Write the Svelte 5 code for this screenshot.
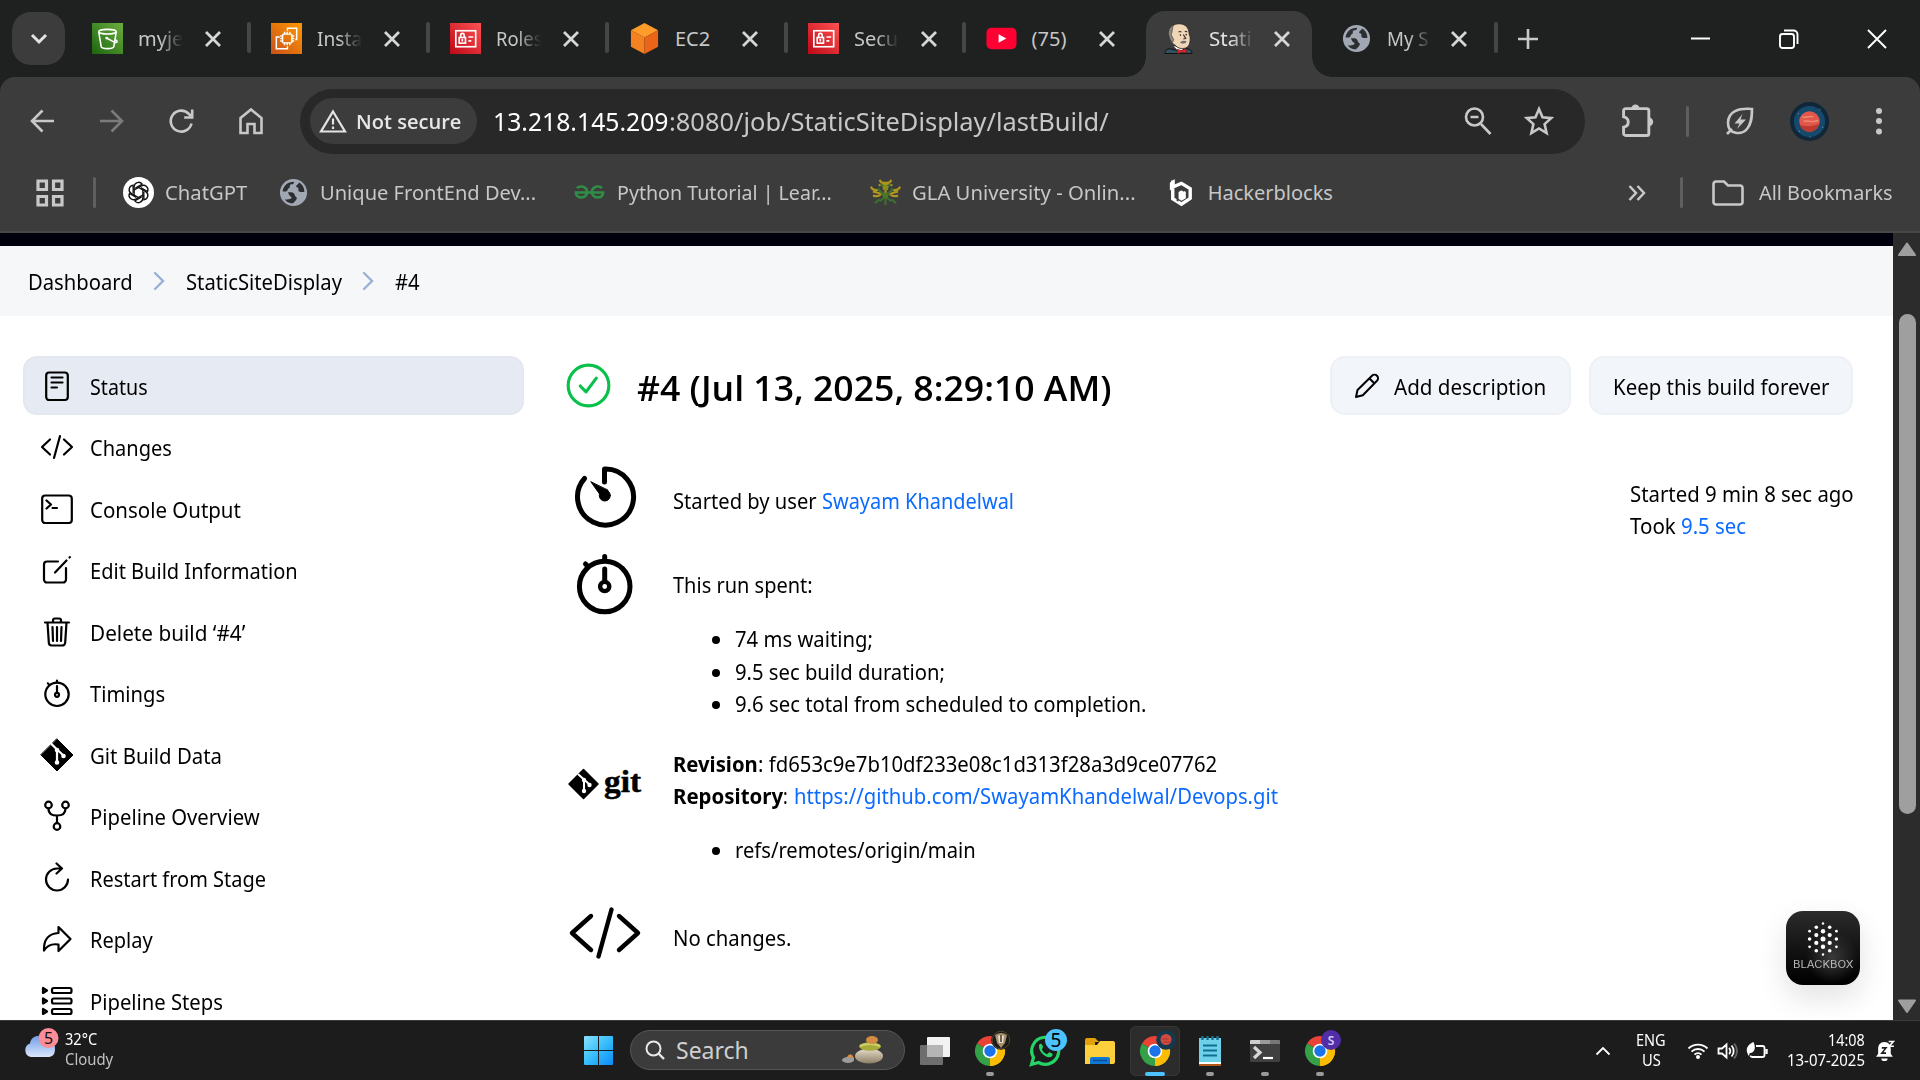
<script>
  // Scales a run of text horizontally to its design width.
  function fit(node, width) {
    const natural = node.offsetWidth;
    node.style.transform = `scaleX(${width / natural})`;
    node.style.marginRight = `${width - natural}px`;
  }

  const tabs = [
    { icon: 'bucket', title: 'myje', w: 45, fade: true },
    { icon: 'instances', title: 'Insta', w: 45, fade: true },
    { icon: 'iam', title: 'Roles', w: 47, fade: true },
    { icon: 'ec2', title: 'EC2', w: 35 },
    { icon: 'iam', title: 'Secu', w: 44, fade: true },
    { icon: 'youtube', title: '(75)', w: 35 },
    { icon: 'jenkins', title: 'Stati', w: 43, fade: true, active: true },
    { icon: 'globe', title: 'My S', w: 42, fade: true }
  ];

  const bookmarks = [
    { icon: 'chatgpt', title: 'ChatGPT', w: 82, gap: 31 },
    { icon: 'globe', title: 'Unique FrontEnd Dev...', w: 216, gap: 38 },
    { icon: 'gfg', title: 'Python Tutorial | Lear...', w: 215, gap: 38 },
    { icon: 'gla', title: 'GLA University - Onlin...', w: 224, gap: 29 },
    { icon: 'hack', title: 'Hackerblocks', w: 125, gap: 0 }
  ];

  const menu = [
    { icon: 'doc', label: 'Status', w: 58, active: true },
    { icon: 'code', label: 'Changes', w: 82 },
    { icon: 'console', label: 'Console Output', w: 151 },
    { icon: 'edit', label: 'Edit Build Information', w: 208 },
    { icon: 'trash', label: 'Delete build ‘#4’', w: 155 },
    { icon: 'timer', label: 'Timings', w: 75 },
    { icon: 'git', label: 'Git Build Data', w: 132 },
    { icon: 'fork', label: 'Pipeline Overview', w: 170 },
    { icon: 'restart', label: 'Restart from Stage', w: 176 },
    { icon: 'replay', label: 'Replay', w: 63 },
    { icon: 'steps', label: 'Pipeline Steps', w: 133 }
  ];

  const dots = [
    [0, -15.5, 1.2], [-6.7, -11.7, 1.8], [6.7, -11.7, 1.8],
    [-13.4, -7.8, 1.4], [0, -7.8, 2.2], [13.4, -7.8, 1.4],
    [-6.7, -3.9, 2.1], [6.7, -3.9, 2.1],
    [-13.4, 0, 1.8], [0, 0, 2.5], [13.4, 0, 1.8],
    [-6.7, 3.9, 2.1], [6.7, 3.9, 2.1],
    [-13.4, 7.8, 1.4], [0, 7.8, 2.2], [13.4, 7.8, 1.4],
    [-6.7, 11.7, 1.8], [6.7, 11.7, 1.8], [0, 15.5, 1.2]
  ];
</script>

{#snippet favicon(name)}
  <svg class="fav" viewBox="0 0 32 32">
    {#if name === 'bucket'}
      <defs><linearGradient id="gb" x1="0" y1="1" x2="1" y2="0"><stop offset="0" stop-color="#1b660f" /><stop offset="1" stop-color="#6cae3e" /></linearGradient></defs>
      <rect width="32" height="32" fill="url(#gb)" />
      <g fill="none" stroke="#fff" stroke-width="1.6"><ellipse cx="16" cy="9" rx="9" ry="2.4" /><path d="M7 9.5 9.5 24.5c1 2.6 12 2.6 13 0L25 9.5M15 15.5l8 4.2c3 1 4-.5 1.5-2.2" /></g>
      <circle cx="15.2" cy="15.6" r="1.5" fill="#fff" />
    {:else if name === 'instances'}
      <defs><linearGradient id="gi" x1="0" y1="1" x2="1" y2="0"><stop offset="0" stop-color="#c8511b" /><stop offset="1" stop-color="#f90" /></linearGradient></defs>
      <rect width="32" height="32" fill="url(#gi)" />
      <g fill="none" stroke="#fff" stroke-width="1.5"><rect x="12" y="11.500" width="9.500" height="9" rx="1" /><path d="M14 9v2.500m2.700-2.500v2.500M19.400 9v2.500M14 20.500V23m2.700-2.500V23m2.700-2.500V23M9.500 13.500H12M9.500 16H12m-2.500 2.500H12m9.500-5H24M21.500 16H24m-2.500 2.500H24M17 8V5.500h9.500V17H25M9 14.500H5.500V26.500H17V24" /></g>
    {:else if name === 'iam'}
      <defs><linearGradient id="gr" x1="0" y1="1" x2="1" y2="0"><stop offset="0" stop-color="#bd0816" /><stop offset="1" stop-color="#ff5252" /></linearGradient></defs>
      <rect width="32" height="32" fill="url(#gr)" />
      <g fill="none" stroke="#fff" stroke-width="1.7"><rect x="6" y="8" width="20.500" height="16.500" /><rect x="9.500" y="15" width="6.500" height="5.800" /><path d="M11 15v-2.500a1.800 1.800 0 0 1 3.600 0V15M19 14.500h5M19 18.500h3M12.700 16.500v2.500" /></g>
    {:else if name === 'ec2'}
      <path d="M16 0 30 7.500 16 15 2 7.500z" fill="#ff9c2a" /><path d="M2 7.500 16 15v17L2 24.500z" fill="#f58220" /><path d="M30 7.500 16 15v17l14-7.500z" fill="#ec6418" />
    {:else if name === 'youtube'}
      <rect x="0.500" y="5" width="31" height="22" rx="5" fill="#ff0033" /><path d="m13 11.500 8 4.500-8 4.500z" fill="#fff" />
    {:else if name === 'jenkins'}
      <path d="M2 31.500c0-3 1.500-4.500 5-5l9 2 8-2c4 0 6 2 6 5z" fill="#335061" stroke="#111" />
      <path d="m11 24 6 6 6-5z" fill="#fff" />
      <path d="M6 12C5 4 11 .7 17 .8s10 4 10 10.700c1.500 3 1 5 1 7-.5 4-2 6.500-5 7.500-4 1-8 0-10.500-3C9 21 6 17 6 12z" fill="#f0d6b7" stroke="#2a2420" stroke-width=".9" />
      <path d="M6.500 14C4.500 9 6.500 4 11 2 9 6 10 9 8.500 12l2.500 5-1 3c-2-1-3-3.500-3.500-6z" fill="#8b8782" stroke="#3b3633" stroke-width=".6" />
      <path d="M16 9.500c1-1 2-1 3 0m3.500-.5c1-.8 1.700-.5 2.500.3M21 12l2.500 4-2.500.5" fill="none" stroke="#3b2a22" stroke-width="1.100" />
      <circle cx="18" cy="12.500" r=".8" fill="#2a2420" /><circle cx="24" cy="12" r=".8" fill="#2a2420" /><path d="M17.500 20q3-3 7-1-2.500 4-7 1z" fill="#6d6b6d" />
      <path d="m15 27 4 1.500 4.500-2 .8 4.500-4.500-1-4.500 1.500z" fill="#e0262b" stroke="#7a1414" stroke-width=".6" />
    {:else if name === 'globe'}
      <circle cx="16" cy="16" r="14" fill="#a2a8b3" />
      <path d="M4.800 15C5.300 9 10 4.800 16.500 4.800c.3 1.500-.7 2.700-2.500 2.700-1.700 0-2 1.300-1.800 2.500.2 1.700-2.200 1.500-2.200 3 0 1-.8 2-2 2zM10.500 15.500c3 .8 4.500-.3 6 1.500 1.200 1.400.5 2.500 2 3.500 1.800 1.200.5 3.500-1 4.500-.8.600-1 1.500-2 2.200-5-.2-7-2-8.500-4.200 3 .5 6.500 0 7-1.500.5-1.300-3.500-2-3.500-6zM19 10.500c2-.3 2.500 1.700 2 3-.4 1 1 2 2.500 2h3.700c.3-4-2-8-5.500-9.800-.4 2-3.700 2.500-2.700 4.800z" fill="#2c2e31" />
    {:else if name === 'chatgpt'}
      <circle cx="16" cy="16" r="16" fill="#fff" />
      <g fill="none" stroke="#111" stroke-width="1.400">
        {#each [0, 60, 120, 180, 240, 300] as a}
          <path d="M11.500 18.500V10a4.600 4.600 0 0 1 8.300-2.600L12.800 11.500" transform="rotate({a} 16 16)" />
        {/each}
      </g>
    {:else if name === 'gfg'}
      <g fill="none" stroke="#2f8d46" stroke-width="2.700"><path d="M3 11.500c2.500-2.500 8-2.500 10 1.500 2 5-2 8-5.500 8s-5.500-2-5.500-5h28c0 3-2 5-5.500 5s-7.500-3-5.500-8c2-4 7.500-4 10-1.500" /></g>
    {:else if name === 'gla'}
      <g fill="none" stroke="#b0961e" stroke-width="2.200"><path d="M10 3q1 3 4 3h4q3 0 4-3M9 9q7-5 14 0M1 10q2 5 9 3M31 10q-2 5-9 3M3 15q13 5 26 0M3 19q5 2 8-1M29 19q-5 2-8-1M16 5v14" /></g>
      <g fill="none" stroke="#3d6e30" stroke-width="2.200"><path d="M11 7l5 6 5-6M8 12l8 8 8-8M10 25l6-5 6 5M5 27l5-4M27 27l-5-4M16 19v10" /></g>
      <circle cx="16" cy="11" r="3" fill="#8d8a20" /><circle cx="16" cy="19" r="3" fill="#4e7426" />
    {:else}
      <path d="M8 3.500v7l9-4 9 5.500v10l-9 6-9-5.500V12" fill="none" stroke="#fff" stroke-width="3.500" /><path d="M5 6 10 2v9l-5 3zM13 15l4-2.500 4.500 3V22L17 24.500 13 22z" fill="#fff" /><path d="M13 25V15l4-2.500 3 2" fill="none" stroke="#3c3c3c" stroke-width="2" />
    {/if}
  </svg>
{/snippet}

{#snippet menuIcon(name)}
  <svg class="micon" viewBox="-18 -18 36 36" fill="none" stroke="#000" stroke-width="2.200" stroke-linecap="round" stroke-linejoin="round">
    {#if name === 'doc'}
      <rect x="-10.800" y="-13.500" width="21.600" height="27.500" rx="3" /><path d="M-5.500-8.500h11M-5.500-3.500h11M-5.500 1.500H0" />
    {:else if name === 'code'}
      <path d="M-7-7.500-15 0l8 7.500M7-7.500 15 0 7 7.500M3-11-3 11" />
    {:else if name === 'console'}
      <rect x="-14.800" y="-13.500" width="29.600" height="27.500" rx="3" /><path d="m-10.500-8.500 4.500 4-4.500 4M-4.500-1H0" />
    {:else if name === 'edit'}
      <path d="M1-8.500h-11a3 3 0 0 0-3 3v15a3 3 0 0 0 3 3H6a3 3 0 0 0 3-3V-2M-2 2.500 9.500-9.500M12.500-12.500l.4-.4" />
    {:else if name === 'trash'}
      <path d="M-12-9.500h24M-9.500-9.500l1.300 20a3 3 0 0 0 3 3H5.200a3 3 0 0 0 3-3l1.300-20M-4-9.500v-2a2 2 0 0 1 2-2h4a2 2 0 0 1 2 2v2M0-5V9M-4.500-5l.5 14M4.500-5 4 9" />
    {:else if name === 'timer'}
      <circle cy="1.300" r="11.700" /><circle cy="1.800" r="2" /><path d="M0-1v-6M0-10.500v-2M-8.500-9l-.7-.7" />
    {:else if name === 'git'}
      <path d="M0-16 16 0 0 16-16 0z" fill="#000" stroke-width="1" /><path d="M-5.500-11 0-5.500V7M0-5.500 6.500.5" stroke="#fff" /><circle cy="7.500" r="2.300" fill="#fff" stroke="none" /><circle cx="6.500" cy="1" r="2.300" fill="#fff" stroke="none" /><circle cy="-5" r="2.300" fill="#fff" stroke="none" />
    {:else if name === 'fork'}
      <circle cx="-8.500" cy="-11" r="3.300" /><circle cx="8.500" cy="-11" r="3.300" /><circle cy="10.500" r="3.300" /><path d="M-8.500-7.500C-8.500-2-5-.5 0-.5s8.500-1.500 8.500-7M0-.5V7" />
    {:else if name === 'restart'}
      <path d="M11 1.500A11 11 0 1 1 0-9.500h5M-.5-14.500l5.500 5-5.500 5" />
    {:else if name === 'replay'}
      <path d="M1.500-12 13.500 0 1.500 12V5.500C-5 4.500-10 6.500-13 11.500c-.5-11 5-17 14.500-17.500z" />
    {:else}
      <path d="M-14-13v5l4-2.500zM-14-2.500v5l4-2.500zM-14 8v5l4-2.500z" /><rect x="-5" y="-13" width="19.500" height="5" rx="1.800" /><rect x="-5" y="-2.500" width="19.500" height="5" rx="1.800" /><rect x="-5" y="8" width="19.500" height="5" rx="1.800" />
    {/if}
  </svg>
{/snippet}

{#snippet chrome(kind)}
  <svg viewBox="0 0 50 60">
    <path d="M25 30 12 22.500A15 15 0 0 1 38 22.500z" fill="#ea4335" />
    <path d="M25 30h0L38 22.500A15 15 0 0 1 25 45l-3-5z" fill="#fbbc04" />
    <path d="M25 30 25 45A15 15 0 0 1 12 22.500z" fill="#34a047" />
    <path d="M25 23h13.200A15 15 0 0 1 25 45l6.300-11.500z" fill="#fbbc04" />
    <circle cx="25" cy="30" r="7.300" fill="#fff" /><circle cx="25" cy="30" r="5.700" fill="#1a73e8" />
    {#if kind === 'lion'}
      <circle cx="36" cy="19" r="9.800" fill="#1d1a17" /><path d="M30 14q6-4 12 0l-2 8-4 5-4-5z" fill="#a4906d" /><path d="M33 15q3-2 6 0l-1 7h-4z" fill="#e6dfcf" /><path d="M36 14v7" stroke="#463a2a" stroke-width="1.500" /><circle cx="36" cy="19" r="8.800" fill="none" stroke="#4d4432" />
    {:else if kind === 'planet'}
      <circle cx="36" cy="19" r="9.800" fill="#14384f" /><circle cx="36" cy="18.500" r="5.500" fill="#d14b40" /><path d="M31.500 18h7M33 21h7" stroke="#a8362f" />
    {:else}
      <circle cx="36" cy="19" r="10" fill="#512da8" /><text x="36" y="23.500" text-anchor="middle" class="badge-s">S</text>
    {/if}
  </svg>
{/snippet}

<div class="screen">
  <div class="tabstrip">
    <div class="tab-menu"><svg width="20" height="14" viewBox="0 0 20 14"><path d="m3 3 7 7 7-7" fill="none" stroke="#e3e3e3" stroke-width="3" /></svg></div>
    <div class="tabs">
      {#each tabs as t, i}
        <div class="tab" class:active={t.active} class:sep={i !== 5 && !t.active}>
          {@render favicon(t.icon)}
          <div class="tab-title" class:fade={t.fade}><span class="t" use:fit={t.w}>{t.title}</span></div>
          <svg class="x" viewBox="0 0 18 18"><path d="m2 2 14 14M16 2 2 16" /></svg>
        </div>
      {/each}
    </div>
    <svg class="plus" viewBox="0 0 20 20"><path d="M10 0v20M0 10h20" stroke="#c8c8c8" stroke-width="2.600" /></svg>
    <div class="winctl">
      <svg viewBox="0 0 20 20"><path d="M0 9.500h19" stroke-width="2" /></svg>
      <svg viewBox="0 0 20 20"><rect x="1" y="5" width="14" height="14" rx="2.500" /><path d="M5 1.500h9.500a4 4 0 0 1 4 4V15" /></svg>
      <svg viewBox="0 0 20 20"><path d="m1 1 18 18M19 1 1 19" /></svg>
    </div>
  </div>

  <div class="chrome-body">
    <div class="toolbar">
      <div class="nav">
        <svg viewBox="0 0 28 28"><path d="M26 14H4M14.500 3.500 4 14l10.500 10.500" /></svg>
        <svg class="dim" viewBox="0 0 28 28"><path d="M2 14h22M13.500 3.500 24 14 13.500 24.500" /></svg>
        <svg viewBox="0 0 28 28"><path d="M24.500 16.500a10.500 10.500 0 1 1-2.500-9.500l3 3M25.200 2.500v8h-8" /></svg>
        <svg viewBox="0 0 28 28"><path d="M3.500 11 14 2.500 24.500 11v15h-7v-9h-7v9h-7z" /></svg>
      </div>
      <div class="omnibox">
        <div class="chip">
          <svg width="28" height="24" viewBox="0 0 28 24"><path d="M14 2.500 26 22.500H2z" fill="none" stroke="#e3e3e3" stroke-width="2.200" /><path d="M14 9.500v6M14 17.500v2.500" stroke="#e3e3e3" stroke-width="2.200" /></svg>
          <span class="t" use:fit={105}>Not secure</span>
        </div>
        <div class="url"><span class="t host" use:fit={176}>13.218.145.209</span><span class="t" use:fit={440}>:8080/job/StaticSiteDisplay/lastBuild/</span></div>
        <svg class="oi" viewBox="0 0 30 30"><circle cx="11.500" cy="11" r="8.500" /><path d="m18 18 9.500 10M7.500 11h8" /></svg>
        <svg class="oi star" viewBox="0 0 30 30"><path d="m15 3 3.500 8.300 8.700.8-6.600 6 2 8.900-7.600-4.600L7.400 27l2-8.900-6.600-6 8.700-.8z" /></svg>
      </div>
      <svg class="puzzle" viewBox="0 0 32 32"><path d="M2.500 6.500a2 2 0 0 1 2-2h20.500a2 2 0 0 1 2 2v22a2 2 0 0 1-2 2H4.500a2 2 0 0 1-2-2v-6c6-1 6-9 0-10z" /><path d="M10 4.500a4 4 0 0 1 8 0zM27 13a4 4 0 0 1 0 8.500z" fill="#c8c8c8" stroke="none" /></svg>
      <i class="vsep"></i>
      <svg class="leaf" viewBox="0 0 30 30"><path d="M27 3C14 2 3 5 3 17c0 12 14 12 19 6 4-5 5-10 5-20zM2 28l5-5" /><path d="m17.500 8-8 9.500h5L12 23l9-9.500h-5.500z" fill="#c8c8c8" stroke="none" /></svg>
      <svg class="avatar" viewBox="0 0 40 40"><circle cx="20" cy="20" r="20" fill="#0f2738" /><circle cx="20" cy="20" r="16" fill="#164a6c" /><circle cx="20" cy="20" r="10.500" fill="#e2574c" /><path d="M10 23c5 2 12 3 20-1-2 6-6 8.500-10 8.500S11 28 10 23z" fill="#bd3a30" /><path d="M12 15c5 2 6-1 12 0M14 20c5-2 8 2 15-1" stroke="#f08a72" stroke-width="1.500" fill="none" /><path d="M8 12h1M30 8h1M33 26h1M9 30h1M20 36h1" stroke="#6fa6c4" /></svg>
      <svg class="kebab" viewBox="0 0 8 28"><circle cx="4" cy="4" r="3" /><circle cx="4" cy="14" r="3" /><circle cx="4" cy="24.500" r="3" /></svg>
    </div>
    <div class="bookmarks">
      <svg class="grid" viewBox="0 0 28 28"><path d="M2 2h8.500v8.500H2zM17.500 2H26v8.500h-8.500zM2 17.500h8.500V26H2zM17.500 17.500H26V26h-8.500z" /></svg>
      <i class="vsep"></i>
      <div class="bm-list">
        {#each bookmarks as b}
          <div class="bm {b.icon}" style:margin-right="{b.gap}px">{@render favicon(b.icon)}<span class="t" use:fit={b.w}>{b.title}</span></div>
        {/each}
      </div>
      <svg class="more" viewBox="0 0 18 18"><path d="m1.500 2 6.500 7-6.500 7M9.500 2l6.500 7-6.500 7" /></svg>
      <i class="vsep"></i>
      <svg class="folder" viewBox="0 0 32 26"><path d="M1.500 4a2.500 2.500 0 0 1 2.500-2.500h8l4 4h12A2.500 2.500 0 0 1 30.500 8v14a2.500 2.500 0 0 1-2.500 2.500H4A2.500 2.500 0 0 1 1.500 22z" /></svg>
      <span class="t" use:fit={134}>All Bookmarks</span>
    </div>
  </div>

  <div class="viewport">
    <div class="page">
      <div class="strip"></div>
      <nav class="crumbs">
        <span class="t" use:fit={105}>Dashboard</span>
        <svg viewBox="0 0 12 20"><path d="m2 2 8 8-8 8" /></svg>
        <span class="t" use:fit={156}>StaticSiteDisplay</span>
        <svg viewBox="0 0 12 20"><path d="m2 2 8 8-8 8" /></svg>
        <span class="t" use:fit={25}>#4</span>
      </nav>
      <div class="body">
        <aside>
          {#each menu as m}
            <div class="item" class:on={m.active}>{@render menuIcon(m.icon)}<span class="t" use:fit={m.w}>{m.label}</span></div>
          {/each}
        </aside>
        <main>
          <div class="head">
            <svg class="ok" viewBox="0 0 46 46"><circle cx="23" cy="23" r="20.800" /><path d="m14.500 23.500 6 6 10.500-14" /></svg>
            <h1><span class="t" use:fit={474}>#4 (Jul 13, 2025, 8:29:10 AM)</span></h1>
            <div class="btn add"><svg viewBox="0 0 26 26"><path d="M2 24l1.500-7L18 2.800a3.400 3.400 0 0 1 5 5L8.800 22.300zM15.500 5.500l5 5" /></svg><span class="t" use:fit={152}>Add description</span></div>
            <div class="btn"><span class="t" use:fit={216}>Keep this build forever</span></div>
          </div>
          <div class="cols">
            <div class="rows">
              <div class="row r1">
                <svg viewBox="566 456 80 90"><path d="M604.500 482v-13a28 28 0 1 1-20 9.500" /><path d="m591 482 10 14a5.500 5.500 0 0 0 7-5.500z" class="solid" /><circle cx="604.800" cy="495.500" r="5.500" class="solid" /></svg>
                <div><span class="t" use:fit={144}>Started by user</span>&nbsp;<a class="t" use:fit={192}>Swayam Khandelwal</a></div>
              </div>
              <div class="row r2">
                <svg viewBox="566 546 80 90"><circle cx="604.700" cy="586.500" r="25.300" /><circle cx="604.700" cy="586.500" r="4.600" stroke-width="4.400" /><path d="M604.700 581.500v-12.500M604.700 559.500v-3M588 566.500l-2.500-2.500" /></svg>
                <div>
                  <span class="t" use:fit={140}>This run spent:</span>
                  <ul>
                    <li><span class="t" use:fit={138}>74 ms waiting;</span></li>
                    <li><span class="t" use:fit={210}>9.5 sec build duration;</span></li>
                    <li><span class="t" use:fit={412}>9.6 sec total from scheduled to completion.</span></li>
                  </ul>
                </div>
              </div>
              <div class="row r3">
                <svg viewBox="566 740 80 90"><path d="m583.500 769.500 14.500 14.500-14.500 14.500L569 784z" fill="#000" stroke-width="1.500" /><path d="m578.500 774.500 5.500 5v11M584 779.500l5.500 5" stroke="#fff" stroke-width="2" /><circle cx="584" cy="791" r="2.200" fill="#fff" stroke="none" /><circle cx="589.500" cy="785" r="2.200" fill="#fff" stroke="none" /><circle cx="584" cy="780" r="2.200" fill="#fff" stroke="none" /><text x="604" y="792" textLength="37" lengthAdjust="spacingAndGlyphs" class="git-word">git</text></svg>
                <div>
                  <p><b class="t" use:fit={85}>Revision</b><span class="t" use:fit={459}>: fd653c9e7b10df233e08c1d313f28a3d9ce07762</span></p>
                  <p><b class="t" use:fit={110}>Repository</b><span class="t" use:fit={5}>:</span><a class="t repo" use:fit={484}>https://github.com/SwayamKhandelwal/Devops.git</a></p>
                  <ul><li><span class="t" use:fit={241}>refs/remotes/origin/main</span></li></ul>
                </div>
              </div>
              <div class="row r4">
                <svg viewBox="566 880 80 90"><path d="m591 916-19 17 19 17M619 916l19 17-19 17M611.500 909.500l-13 47" stroke-width="4.400" /></svg>
                <div><span class="t" use:fit={118}>No changes.</span></div>
              </div>
            </div>
            <div class="when">
              <p><span class="t" use:fit={224}>Started 9 min 8 sec ago</span></p>
              <p><span class="t" use:fit={46}>Took</span><a class="t" use:fit={65}>9.5 sec</a></p>
            </div>
          </div>
        </main>
      </div>
      <div class="blackbox">
        <svg viewBox="-23 -18 46 36">{#each dots as [x, y, r]}<circle cx={x} cy={y} {r} fill="#fff" />{/each}</svg>
        <span class="t" use:fit={60}>BLACKBOX</span>
      </div>
    </div>
    <div class="scroll">
      <svg viewBox="0 0 20 15"><path d="M10 1.500 18 13H2z" /></svg>
      <div class="thumb"></div>
      <svg viewBox="0 0 20 15"><path d="M10 13 18 1.500H2z" /></svg>
    </div>
  </div>

  <div class="taskbar">
    <div class="weather">
      <svg viewBox="0 0 36 36"><defs><linearGradient id="cl" x1="0" y1="0" x2="0" y2="1"><stop offset="0" stop-color="#6f9de8" /><stop offset="1" stop-color="#dbe7fb" /></linearGradient></defs><path d="M8 31a7 7 0 0 1-1-13.500C8 9 19 7 23 14c6-1 9 3 9 9s-3 8-7 8z" fill="url(#cl)" /><circle cx="25.500" cy="12" r="10" fill="#fc8d97" /><text x="25.500" y="17.500" text-anchor="middle" class="badge-w">5</text></svg>
      <div class="two"><span class="t" use:fit={32}>32°C</span><span class="t grey" use:fit={48}>Cloudy</span></div>
    </div>
    <div class="apps">
      <svg class="win" viewBox="0 0 29 29"><defs><linearGradient id="wg" x1="0" y1="0" x2="1" y2="1"><stop offset="0" stop-color="#8be2ff" /><stop offset=".5" stop-color="#37bdfb" /><stop offset="1" stop-color="#0a8bf5" /></linearGradient></defs><path d="M0 1q0-1 1-1h13v14H0zM15 0h13q1 0 1 1v13H15zM0 15h14v14H1q-1 0-1-1zM15 15h14v13q0 1-1 1H15z" fill="url(#wg)" /></svg>
      <div class="search">
        <svg width="20" height="20" viewBox="0 0 20 20"><circle cx="8.500" cy="8.500" r="7" fill="none" stroke="#e8e8e8" stroke-width="2" /><path d="m13.500 13.500 5.500 5.500" stroke="#e8e8e8" stroke-width="2.400" /></svg>
        <span class="t" use:fit={73}>Search</span>
        <svg class="stones" viewBox="0 0 42 28"><defs><linearGradient id="st" x1="0" y1="0" x2="0" y2="1"><stop offset="0" stop-color="#e6dcc8" /><stop offset="1" stop-color="#8d8068" /></linearGradient></defs><path d="M4 24c1-5 4-7 6-5s3 5 1 6z" fill="#d98c3c" /><ellipse cx="6" cy="24" rx="6" ry="3" fill="#9b9b9b" /><ellipse cx="27" cy="20" rx="14" ry="7.500" fill="url(#st)" /><ellipse cx="28" cy="10.500" rx="11" ry="4.200" fill="#a6ab3c" /><path d="M18 10q10-4 20 0" stroke="#cfd26a" stroke-width="2" fill="none" /><ellipse cx="30" cy="4" rx="6" ry="4" fill="#d48b42" /></svg>
      </div>
      <svg class="views" viewBox="0 0 30 28"><rect x="7" width="23" height="20" rx="1" fill="#f2f2f2" /><rect y="8" width="23" height="20" rx="1" fill="#6e6e6e" /><rect x="7" y="8" width="16" height="12" fill="#b5b5b5" /></svg>
      <div class="app run">{@render chrome('lion')}</div>
      <div class="app">
        <svg viewBox="0 0 50 60"><path d="M11.500 43.500 13.500 36.500a13.500 13.500 0 1 1 5 5z" fill="none" stroke="#25d366" stroke-width="3.200" /><path d="M19 24c1.500-2 3-1.500 4 2l-1 2.500c1 2.500 3 4 5 4.800l2.200-2c3.500 1 4 2.200 2.800 4-4 3.500-14-3.300-13-11.300z" fill="#25d366" /><circle cx="36" cy="19" r="11" fill="#4cc2ff" /><text x="36" y="26" text-anchor="middle" class="badge-n">5</text></svg>
      </div>
      <div class="app"><svg viewBox="0 0 50 60"><path d="M10 19q0-2 2-2h8l4 4h-4v5H10z" fill="#e3a008" /><path d="M10 24h12l3-4h13q2 0 2 2v19q0 2-2 2H10z" fill="#fdcf3c" /><path d="M15 43v-5q0-2 2-2h16q2 0 2 2v5z" fill="#0f78d4" /><path d="M18 39.500h14" stroke="#0a4f94" stroke-width="1.500" /></svg></div>
      <div class="app run current">{@render chrome('planet')}</div>
      <div class="app run"><svg viewBox="0 0 50 60"><path d="M14 17h22v27H14z" fill="#6fd0ea" /><path d="M14 41h22v2.500H14z" fill="#fff" /><path d="M14 43h22v2H14z" fill="#b0581c" /><path d="M18 24.500h14M18 29.500h14M18 34.500h14" stroke="#0f6f91" stroke-width="1.800" /><path d="M17.500 15v4M22.500 15v4M27.500 15v4M32.500 15v4" stroke="#1b6f8c" stroke-width="2.400" /></svg></div>
      <div class="app run"><svg viewBox="0 0 50 60"><rect x="10" y="19" width="30" height="22" rx="1.500" fill="#404040" /><path d="M10 23v-3q0-1 1-1h9v4z" fill="#cfcfcf" /><path d="M20 19h10v4H20z" fill="#9a9a9a" /><path d="M30 19h9q1 0 1 1v3H30z" fill="#777" /><path d="m14 26 6 5.500-6 5.500" fill="none" stroke="#d8d8d8" stroke-width="3.200" /><path d="M23 37h10" stroke="#fff" stroke-width="2.200" /></svg></div>
      <div class="app run">{@render chrome('s')}</div>
    </div>
    <div class="tray">
      <svg class="caret" viewBox="0 0 16 10"><path d="m1.500 8.500 6.500-6.500 6.500 6.500" /></svg>
      <div class="two mid"><span class="t" use:fit={30}>ENG</span><span class="t" use:fit={19}>US</span></div>
      <svg class="wifi" viewBox="0 0 22 18"><path d="M1.500 6.500a13.500 13.500 0 0 1 19 0M4.500 9.700a9.200 9.200 0 0 1 13 0M7.500 12.700a5 5 0 0 1 7 0" /><circle cx="11" cy="15" r="2" fill="#fff" stroke="none" /></svg>
      <svg class="spk" viewBox="0 0 22 18"><path d="M1.500 6.500v5H5l4.500 4V2.500L5 6.500zM12 6a4 4 0 0 1 0 6M14.500 3.500a8 8 0 0 1 0 11" /><path d="M17 1.500a11 11 0 0 1 0 15" stroke="#666" /></svg>
      <svg class="bat" viewBox="0 0 22 18"><path d="M10 4h6.500q2 0 2 2v7q0 2-2 2h-10q-2 0-2-1.500" /><path d="M20.500 7v5" stroke-width="2.400" /><path d="M1 10C0 5 3 2 7.500 0c2.500 5 1.500 11-3.500 11L2.500 14z" fill="#fff" stroke="none" /></svg>
      <div class="two end"><span class="t" use:fit={37}>14:08</span><span class="t" use:fit={78}>13-07-2025</span></div>
      <svg class="bell" viewBox="0 0 20 20"><path d="M9 2c4 0 6 3 6 6.500V13l2 3H1l2-3V8.500C3 5 5 2 9 2zM6 17.500h6a3 2.500 0 0 1-6 0z" fill="#fff" /><path d="M6.500 7.500h4l-4 5h4" stroke="#1c1c1c" stroke-width="1.500" fill="none" /><path d="M13 1.500h4.500L13.500 6H18" stroke="#fff" stroke-width="1.500" fill="none" /></svg>
    </div>
  </div>
</div>

<style>
  :global(body) { margin: 0; overflow: hidden; }
  .screen { width: 1920px; height: 1080px; display: flex; flex-direction: column; overflow: hidden; background: #1f2120; font-family: "Noto Sans", "Open Sans", sans-serif; font-size: 21px; color: #000; }
  svg { display: block; flex: none; }
  .t { display: inline-block; white-space: pre; transform-origin: 0 50%; flex: none; }
  a { color: #0b6aff; }
  p { margin: 0; }

  .tabstrip { height: 77px; flex: none; display: flex; align-items: center; padding-left: 12px; }
  .tab-menu { width: 53px; height: 53px; margin-right: 7px; border-radius: 19px; background: #3c3c3c; display: flex; align-items: center; justify-content: center; }
  .tabs { display: flex; align-self: stretch; }
  .tab { position: relative; width: 157.600px; padding-left: 20px; display: flex; align-items: center; color: #c7c7c7; font-size: 20px; }
  .tab:nth-child(-n+4) { width: 159px; }
  .tab.active { color: #e3e3e3; z-index: 1; }
  .tab.active::before { content: ''; position: absolute; z-index: -1; left: 3px; top: 11px; width: 166px; height: 66px; background: #3c3c3c; border-radius: 19px 19px 0 0; }
  .tab.active::after { content: ''; position: absolute; z-index: -1; left: -17px; bottom: 0; width: 206px; height: 20px; background: radial-gradient(circle at 0 0, transparent 19.500px, #3c3c3c 20px) 0 0 / 20px 20px no-repeat, radial-gradient(circle at 100% 0, transparent 19.500px, #3c3c3c 20px) 100% 0 / 20px 20px no-repeat; }
  .tab.sep::after { content: ''; position: absolute; right: 0; top: 22px; width: 4px; height: 31px; border-radius: 2px; background: #454746; }
  .fav { width: 31px; height: 31px; }
  .tab-title { width: 48px; margin-left: 15px; overflow: hidden; display: flex; }
  .tab-title.fade { -webkit-mask-image: linear-gradient(90deg, #000 45%, transparent 94%); mask-image: linear-gradient(90deg, #000 45%, transparent 94%); }
  .x { width: 18px; height: 18px; margin-left: 18px; stroke: #d6d6d6; stroke-width: 2.800; fill: none; }
  .tab.active .x, .tab:last-child .x { margin-left: 15.500px; }
  .plus { width: 20px; height: 20px; margin-left: 20px; }
  .winctl { margin-left: auto; display: flex; gap: 68px; padding-right: 33px; }
  .winctl svg { width: 20px; height: 20px; fill: none; stroke: #fff; stroke-width: 1.900; }

  .chrome-body { background: #3c3c3c; height: 154px; flex: none; border-bottom: 2px solid #494846; border-radius: 15px 15px 0 0; color: #c7c7c7; }
  .toolbar { height: 88px; display: flex; align-items: center; padding-left: 28px; }
  .nav { display: flex; gap: 41.500px; width: 272px; }
  .nav svg { width: 28px; height: 28px; fill: none; stroke: #c8c8c8; stroke-width: 2.600; }
  .nav .dim { stroke: #7b7b7b; }
  .omnibox { width: 1275px; height: 65px; border-radius: 33px; background: #282828; display: flex; align-items: center; padding-left: 10px; }
  .chip { width: 158px; height: 46px; padding-left: 9px; border-radius: 23px; background: #3c3c3c; display: flex; align-items: center; gap: 9px; font: 600 19.500px "Open Sans", sans-serif; color: #e6e6e6; }
  .url { width: 970px; margin-left: 16px; display: flex; font-size: 26px; color: #c7c7c7; }
  .host { color: #fff; }
  .oi { width: 30px; height: 30px; fill: none; stroke: #c8c8c8; stroke-width: 2.600; }
  .star { margin-left: 31px; }
  .puzzle { width: 33px; height: 33px; margin: -2px 0 0 36px; fill: none; stroke: #c8c8c8; stroke-width: 2.800; }
  .vsep { width: 3px; height: 31px; border-radius: 2px; background: #5f5f5f; flex: none; }
  .toolbar .vsep { margin: 0 36px 0 32px; }
  .leaf { width: 30px; height: 30px; fill: none; stroke: #c8c8c8; stroke-width: 2.600; }
  .avatar { width: 39px; height: 39px; margin-left: 35px; }
  .kebab { width: 8px; height: 28px; margin-left: 46px; fill: #c8c8c8; }
  .bookmarks { height: 55px; display: flex; align-items: center; padding-left: 36px; font-size: 20px; }
  .grid { width: 28px; height: 28px; margin-right: 29px; fill: none; stroke: #c8c8c8; stroke-width: 3.200; }
  .bm-list { display: flex; width: 1504px; margin-left: 27px; }
  .bm { display: flex; align-items: center; gap: 12px; }
  .bm.chatgpt { gap: 11px; }
  .bm.globe { gap: 11px; }
  .bm.gla { gap: 11px; }
  .more { width: 20px; height: 18px; margin-right: 33px; fill: none; stroke: #c8c8c8; stroke-width: 2.500; }
  .folder { width: 32px; height: 28px; margin: 0 15px 0 29px; fill: none; stroke: #c8c8c8; stroke-width: 2.600; }

  .viewport { flex: 1; min-height: 0; display: flex; background: #fff; }
  .page { width: 1893px; position: relative; overflow: hidden; }
  .strip { height: 13px; background: #00000c; }
  .crumbs { height: 70px; display: flex; align-items: center; background: #f6f7f9; padding-left: 28px; }
  .crumbs svg { width: 12px; height: 20px; margin: 0 21px 0 20px; fill: none; stroke: #9bb0d6; stroke-width: 2.400; stroke-linecap: round; }
  .crumbs .t { padding-top: 2px; }
  .body { display: flex; gap: 42px; padding: 40px 40px 0 23px; }
  aside { width: 501px; flex: none; display: flex; flex-direction: column; gap: 2.500px; }
  .item { height: 59px; box-sizing: border-box; display: flex; align-items: center; gap: 15px; padding-left: 16px; border-radius: 14px; flex: none; }
  .item.on { background: #e6eaf3; border: 2px solid #e3e7f0; padding-left: 14px; }
  .item .t { padding-top: 2px; }
  .btn .t { padding-top: 3px; }
  .micon { width: 36px; height: 36px; }
  main { flex: 1; }
  .head { height: 59px; display: flex; align-items: center; }
  .ok { width: 45px; height: 45px; fill: none; stroke: #09c04b; stroke-width: 3.200; stroke-linecap: round; stroke-linejoin: round; }
  h1 { margin: 0 auto 0 26px; font: 600 35px "Open Sans", sans-serif; line-height: 50px; padding-top: 4px; }
  .btn { height: 59px; box-sizing: border-box; display: flex; align-items: center; gap: 12px; padding: 0 22px; border: 2px solid #edf1f6; border-radius: 15px; background: #f2f5f9; margin-left: 18px; }
  .btn.add { gap: 14px; }
  .btn svg { width: 26px; height: 26px; fill: none; stroke: #000; stroke-width: 2; stroke-linejoin: round; }
  .cols { display: flex; justify-content: space-between; margin-top: 41px; line-height: 32.400px; }
  .row { display: flex; gap: 27px; }
  .row svg { width: 80px; height: 90px; fill: none; stroke: #000; stroke-width: 5; stroke-linecap: round; stroke-linejoin: round; }
  .row .solid { fill: #000; stroke-width: 1; }
  .row p { display: flex; height: 32.400px; }
  .repo { margin-left: 6px; }
  .row div { flex: none; }
  .r1 { height: 90px; }
  .r1 div { padding-top: 29px; }
  .r2 { height: 194px; }
  .r2 div { padding-top: 23px; }
  .r3 { height: 140px; }
  .r3 div { padding-top: 7.500px; }
  .r4 div { padding-top: 41.500px; }
  .git-word { font: 700 31px "Liberation Serif", serif; fill: #000; stroke: #000; stroke-width: .5; }
  ul { margin: 22px 0 0; padding: 0 0 0 62px; list-style: none; }
  li { display: flex; height: 32.400px; position: relative; }
  li::before { content: ''; position: absolute; left: -23px; top: 13px; width: 8px; height: 8px; border-radius: 50%; background: #000; }
  .when { padding-top: 22px; margin-right: -1px; }
  .when p { display: flex; }
  .when p:last-child { gap: 5px; height: 32px; }
  .blackbox { position: absolute; left: 1786px; top: 678px; width: 74px; height: 74px; border-radius: 17px; background: radial-gradient(ellipse at 62% 62%, #3a3a3a, transparent 40%), linear-gradient(#2c2c2c, #111 55%, #000); box-shadow: 0 12px 30px rgba(0, 0, 0, .12); color: #b9b9b9; font-size: 10px; line-height: 14px; font-family: Inter, sans-serif; }
  .blackbox svg { width: 46px; height: 36px; margin: 10px 0 0 14px; }
  .blackbox .t { margin-left: 7px; }
  .scroll { width: 27px; background: #2c2c2c; display: flex; flex-direction: column; align-items: center; padding: 9px 0 6px; box-sizing: border-box; }
  .scroll svg { width: 20px; height: 15px; fill: #9f9f9f; stroke: #9f9f9f; stroke-width: 2; stroke-linejoin: round; }
  .thumb { width: 17px; height: 500px; margin: 57px 0 auto 2px; border-radius: 9px; background: #9f9f9f; }

  .taskbar { height: 59px; flex: none; border-top: 1px solid #3b3b3b; background: #1c1c1c; display: flex; align-items: center; color: #fff; font-size: 15.500px; }
  .weather { width: 559px; flex: none; padding-left: 23px; display: flex; gap: 6px; height: 59px; }
  .weather svg { width: 36px; height: 36px; margin-top: 5px; }
  .two { display: flex; flex-direction: column; line-height: 20px; padding-top: 9px; height: 50px; align-items: flex-start; }
  .weather .two { padding-top: 8px; }
  .mid { align-items: center; }
  .end { align-items: flex-end; }
  .grey { color: #c2c2c2; }
  .badge-w { font: 16px "Noto Sans", sans-serif; fill: #111; }
  .badge-s { font: 600 12px "Noto Sans", sans-serif; fill: #d9cdf3; }
  .badge-n { font: 19px "Noto Sans", sans-serif; fill: #000; }
  .apps { display: flex; flex: none; align-items: center; margin-left: 2px; height: 59px; }
  .win { width: 29px; height: 29px; }
  .search { width: 275px; height: 40px; flex: none; box-sizing: border-box; margin: -1px 15px 0 17px; border: 1px solid #565656; border-radius: 20px; background: #3b3b3b; display: flex; align-items: center; padding-left: 14px; gap: 11px; font-size: 23px; color: #cfcfcf; }
  .stones { width: 42px; height: 28px; margin-left: auto; margin-right: 20px; }
  .views { width: 30px; height: 28px; margin-right: 15px; }
  .app { position: relative; width: 50px; height: 50px; margin-right: 5px; border-radius: 6px; flex: none; display: flex; align-items: center; }
  .app svg { width: 50px; height: 60px; }
  .app.run::after { content: ''; position: absolute; left: 21px; bottom: 0; width: 8px; height: 4px; border-radius: 2px; background: #9a9a9a; }
  .app.current { background: #2c2c2c; box-shadow: inset 0 0 0 1px #363636; }
  .app.current::after { left: 15px; width: 20px; background: #4cc2ff; }
  .tray { display: flex; align-items: center; margin-left: auto; padding-right: 24px; flex: none; }
  .tray svg { fill: none; stroke: #fff; stroke-width: 1.800; }
  .caret { width: 16px; height: 10px; margin-right: 25px; }
  .wifi { width: 22px; height: 18px; margin: 0 8px 0 21px; }
  .spk { width: 22px; height: 18px; margin-right: 7px; }
  .bat { width: 22px; height: 18px; margin-right: 19px; }
  .tray .bell { width: 21px; height: 21px; margin-left: 10px; stroke: none; }
</style>
